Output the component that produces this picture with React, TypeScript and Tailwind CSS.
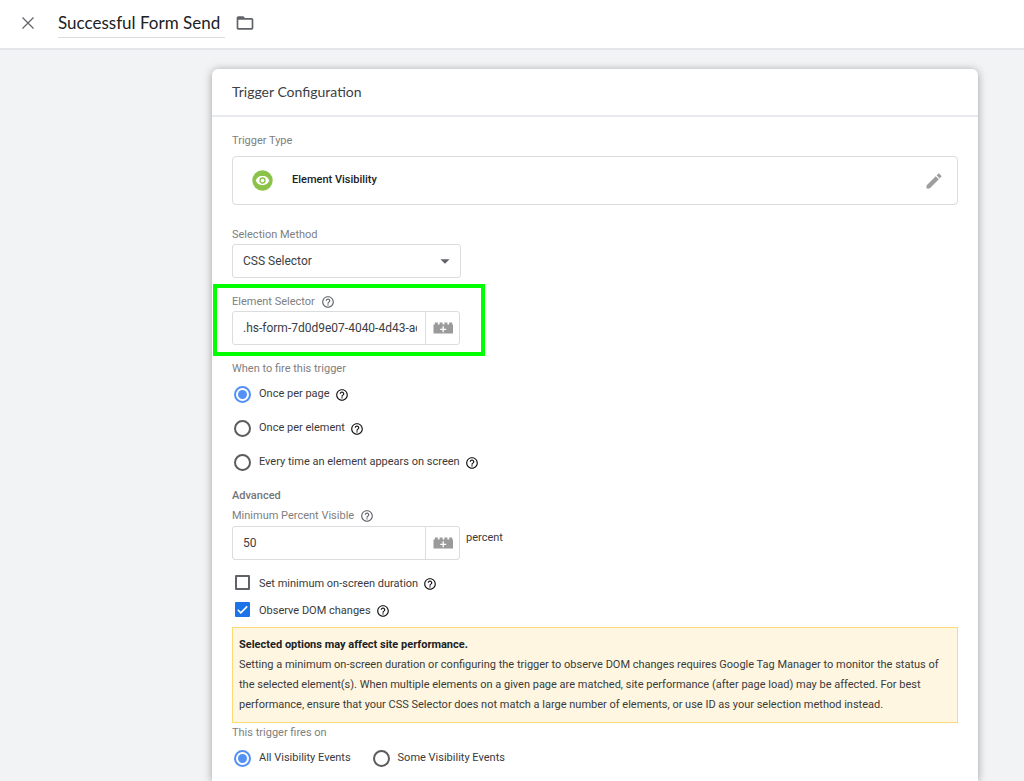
import { useState } from 'react';
import type { ReactNode } from 'react';
import { MdArrowDropDown, MdEdit, MdFolderOpen, MdHelpOutline } from 'react-icons/md';

const CloseIcon = () => (
  <svg className="w-3 h-3" viewBox="0 0 12 12" fill="none" stroke="currentColor" strokeWidth={1.2}>
    <path d="M0.5 0.5l11 11M11.5 0.5l-11 11" />
  </svg>
);

const EyeIcon = () => (
  <svg className="w-[21px] h-[21px]" viewBox="0 0 21 21">
    <circle cx="10.5" cy="10.5" r="10.2" fill="#8bc34a" />
    <path d="M10.5 5.8c-3.1 0-5.7 1.9-6.8 4.7 1.1 2.8 3.7 4.7 6.8 4.7s5.7-1.9 6.8-4.7c-1.1-2.8-3.7-4.7-6.8-4.7z" fill="#fff" />
    <circle cx="10.5" cy="10.5" r="2.5" fill="none" stroke="#8bc34a" strokeWidth="1.3" />
  </svg>
);

const BrickIcon = () => (
  <svg className="w-5 h-3" viewBox="0 0 20 12">
    <path d="M0.5 2.5h1.3V0.5h3v2h1.8V0.5h3v2h1.8V0.5h3v2h1.8V0.5h3v2h0.8v9h-19.5z" fill="#9a9a9a" />
    <path d="M10.2 4.3v6M7.2 7.3h6" stroke="#fff" strokeWidth="1.3" />
  </svg>
);

const HelpButton = ({ dark = false }: { dark?: boolean }) => (
  <button type="button" aria-label="Help" className={dark ? 'pt-0.5 text-[#111111]' : 'text-[#5f6368]'}>
    <MdHelpOutline className="w-[14px] h-[14px]" />
  </button>
);

interface RadioProps {
  name: string;
  label: string;
  checked: boolean;
  onChange: () => void;
  help?: boolean;
}

const Radio = ({ name, label, checked, onChange, help }: RadioProps) => (
  <div className="flex items-center gap-[5px] h-[34px]">
    <label className="flex items-center gap-2 pl-0.5">
      <input
        type="radio"
        name={name}
        checked={checked}
        onChange={onChange}
        className="appearance-none grid place-content-center w-[17px] h-[17px] rounded-full border-2 border-[#5c5c5c] checked:border-[#5491f5] checked:before:w-[9px] checked:before:h-[9px] checked:before:rounded-full checked:before:bg-[#5491f5]"
      />
      {label}
    </label>
    {help && <HelpButton dark />}
  </div>
);

interface CheckboxProps {
  label: string;
  checked: boolean;
  onChange: () => void;
}

const Checkbox = ({ label, checked, onChange }: CheckboxProps) => (
  <div className="flex items-center gap-[5px] h-[27px]">
    <label className="flex items-center gap-2 pl-[3px]">
      <span className="grid">
        <input
          type="checkbox"
          checked={checked}
          onChange={onChange}
          className="appearance-none col-start-1 row-start-1 w-[15px] h-[15px] rounded-[1px] border-2 border-[#5f6368] checked:border-[#1a73e8] checked:bg-[#1a73e8]"
        />
        {checked && (
          <svg className="col-start-1 row-start-1 w-[15px] h-[15px] pointer-events-none" viewBox="0 0 15 15" fill="none" stroke="#fff" strokeWidth={1.6}>
            <path d="M2.8 7.8l3 3 6.4-6.4" />
          </svg>
        )}
      </span>
      <span className="pl-px pt-[3px]">{label}</span>
    </label>
    <HelpButton dark />
  </div>
);

interface VariableInputProps {
  id: string;
  value: string;
  onChange: (value: string) => void;
}

// Text box with the "insert variable" brick on its right
const VariableInput = ({ id, value, onChange }: VariableInputProps) => (
  <div className="flex w-[228px] h-[34px] rounded-[3px] border border-[#dadce0]">
    <div className="flex-1 min-w-0 pl-2.5 pr-2 border-r border-[#dadce0]">
      <input
        id={id}
        type="text"
        value={value}
        onChange={(e) => onChange(e.target.value)}
        className="w-full h-full text-xs text-[#3c4043] outline-none"
      />
    </div>
    <button type="button" aria-label="Insert variable" className="w-[33px] flex items-center justify-center">
      <BrickIcon />
    </button>
  </div>
);

const FieldLabel = ({ htmlFor, children }: { htmlFor?: string; children: ReactNode }) => (
  <label htmlFor={htmlFor} className="block leading-4 text-[#808080]">
    {children}
  </label>
);

const App = () => {
  const [name, setName] = useState('Successful Form Send');
  const [method, setMethod] = useState('CSS Selector');
  const [selector, setSelector] = useState('.hs-form-7d0d9e07-4040-4d43-ac1e');
  const [fireOn, setFireOn] = useState('page');
  const [percent, setPercent] = useState('50');
  const [minDuration, setMinDuration] = useState(false);
  const [observeDom, setObserveDom] = useState(true);
  const [events, setEvents] = useState('all');

  return (
    <div className="min-h-screen flex flex-col bg-[#f1f3f4] font-['Roboto',sans-serif] text-[11px] text-[#3a3a3a]">
      <header className="flex items-center h-[50px] pl-[22px] pb-0.5 bg-white border-b-2 border-[#e4e6e9] text-[#5f6368]">
        <button type="button" aria-label="Close">
          <CloseIcon />
        </button>
        <input
          type="text"
          aria-label="Trigger name"
          value={name}
          onChange={(e) => setName(e.target.value)}
          className="w-[167px] h-[30px] ml-6 border-b border-[#dadce0] font-['Lato',sans-serif] text-[17px] text-[#202124] outline-none"
        />
        <button type="button" aria-label="Move to folder" className="ml-2.5">
          <MdFolderOpen className="w-5 h-5" />
        </button>
      </header>

      <main className="flex-1 flex flex-col pt-[19px] pl-[212px] pr-[46px]">
        <section className="flex-1 rounded-t-md bg-white shadow-[0_1px_8px_rgba(0,0,0,0.35)]">
          <h2 className="h-12 px-5 border-b-2 border-[#e8eaed] font-['Lato',sans-serif] text-sm leading-[45px] text-[#3c4043]">
            Trigger Configuration
          </h2>

          <div className="px-5 pt-4 pb-1">
            <p className="leading-4 text-[#808080]">Trigger Type</p>
            <div className="flex items-center h-[49px] mt-[7px] pl-[19px] pr-[13px] rounded border border-[#dadce0]">
              <EyeIcon />
              <span className="flex-1 ml-[19px] font-medium text-[#202124]">Element Visibility</span>
              <button type="button" aria-label="Edit trigger type" className="text-[#9e9e9e]">
                <MdEdit className="w-5 h-5" />
              </button>
            </div>

            <div className="mt-[22px]">
              <FieldLabel htmlFor="method">Selection Method</FieldLabel>
              <div className="relative w-[229px] mt-px">
                <select
                  id="method"
                  value={method}
                  onChange={(e) => setMethod(e.target.value)}
                  className="appearance-none w-full h-[34px] px-2.5 rounded-[3px] border border-[#dadce0] bg-white text-xs text-[#3c4043]"
                >
                  <option>CSS Selector</option>
                  <option>ID</option>
                </select>
                <MdArrowDropDown className="absolute right-[5px] top-1.5 w-[22px] h-[22px] text-[#5f6368] pointer-events-none" />
              </div>
            </div>

            <div className="relative mt-4">
              <div className="flex items-center gap-1.5">
                <FieldLabel htmlFor="selector">Element Selector</FieldLabel>
                <HelpButton />
              </div>
              <div className="mt-px">
                <VariableInput id="selector" value={selector} onChange={setSelector} />
              </div>
              {/* Highlight frame */}
              <div className="absolute -top-2.5 -left-[19px] w-[272px] h-[72px] border-4 border-[#00ff00] pointer-events-none" />
            </div>

            <fieldset className="mt-4">
              <legend className="leading-4 text-[#808080]">When to fire this trigger</legend>
              <Radio name="fire" label="Once per page" checked={fireOn === 'page'} onChange={() => setFireOn('page')} help />
              <Radio name="fire" label="Once per element" checked={fireOn === 'element'} onChange={() => setFireOn('element')} help />
              <Radio name="fire" label="Every time an element appears on screen" checked={fireOn === 'every'} onChange={() => setFireOn('every')} help />
            </fieldset>

            <h3 className="mt-[9px] leading-4 font-medium text-[#757575]">Advanced</h3>
            <div className="flex items-center gap-1.5 mt-1">
              <FieldLabel htmlFor="percent">Minimum Percent Visible</FieldLabel>
              <HelpButton />
            </div>
            <div className="flex gap-1.5 mt-0.5">
              <VariableInput id="percent" value={percent} onChange={setPercent} />
              <span className="pt-1 leading-4">percent</span>
            </div>

            <div className="mt-[9px]">
              <Checkbox label="Set minimum on-screen duration" checked={minDuration} onChange={() => setMinDuration(!minDuration)} />
              <Checkbox label="Observe DOM changes" checked={observeDom} onChange={() => setObserveDom(!observeDom)} />
            </div>

            <div className="mt-1 px-1.5 pt-[7px] pb-[7px] border border-[#fdd978] bg-[#fef6e0] leading-5">
              <p className="font-bold text-[#202124]">Selected options may affect site performance.</p>
              <p>
                Setting a minimum on-screen duration or configuring the trigger to observe DOM changes requires Google Tag Manager to monitor the status of the selected element(s). When multiple elements on a given page are matched, site performance (after page load) may be affected. For best performance, ensure that your CSS Selector does not match a large number of elements, or use ID as your selection method instead.
              </p>
            </div>

            <fieldset className="mt-0.5">
              <legend className="leading-4 text-[#808080]">This trigger fires on</legend>
              <div className="flex gap-5">
                <Radio name="events" label="All Visibility Events" checked={events === 'all'} onChange={() => setEvents('all')} />
                <Radio name="events" label="Some Visibility Events" checked={events === 'some'} onChange={() => setEvents('some')} />
              </div>
            </fieldset>
          </div>
        </section>
      </main>
    </div>
  );
};

export default App;
